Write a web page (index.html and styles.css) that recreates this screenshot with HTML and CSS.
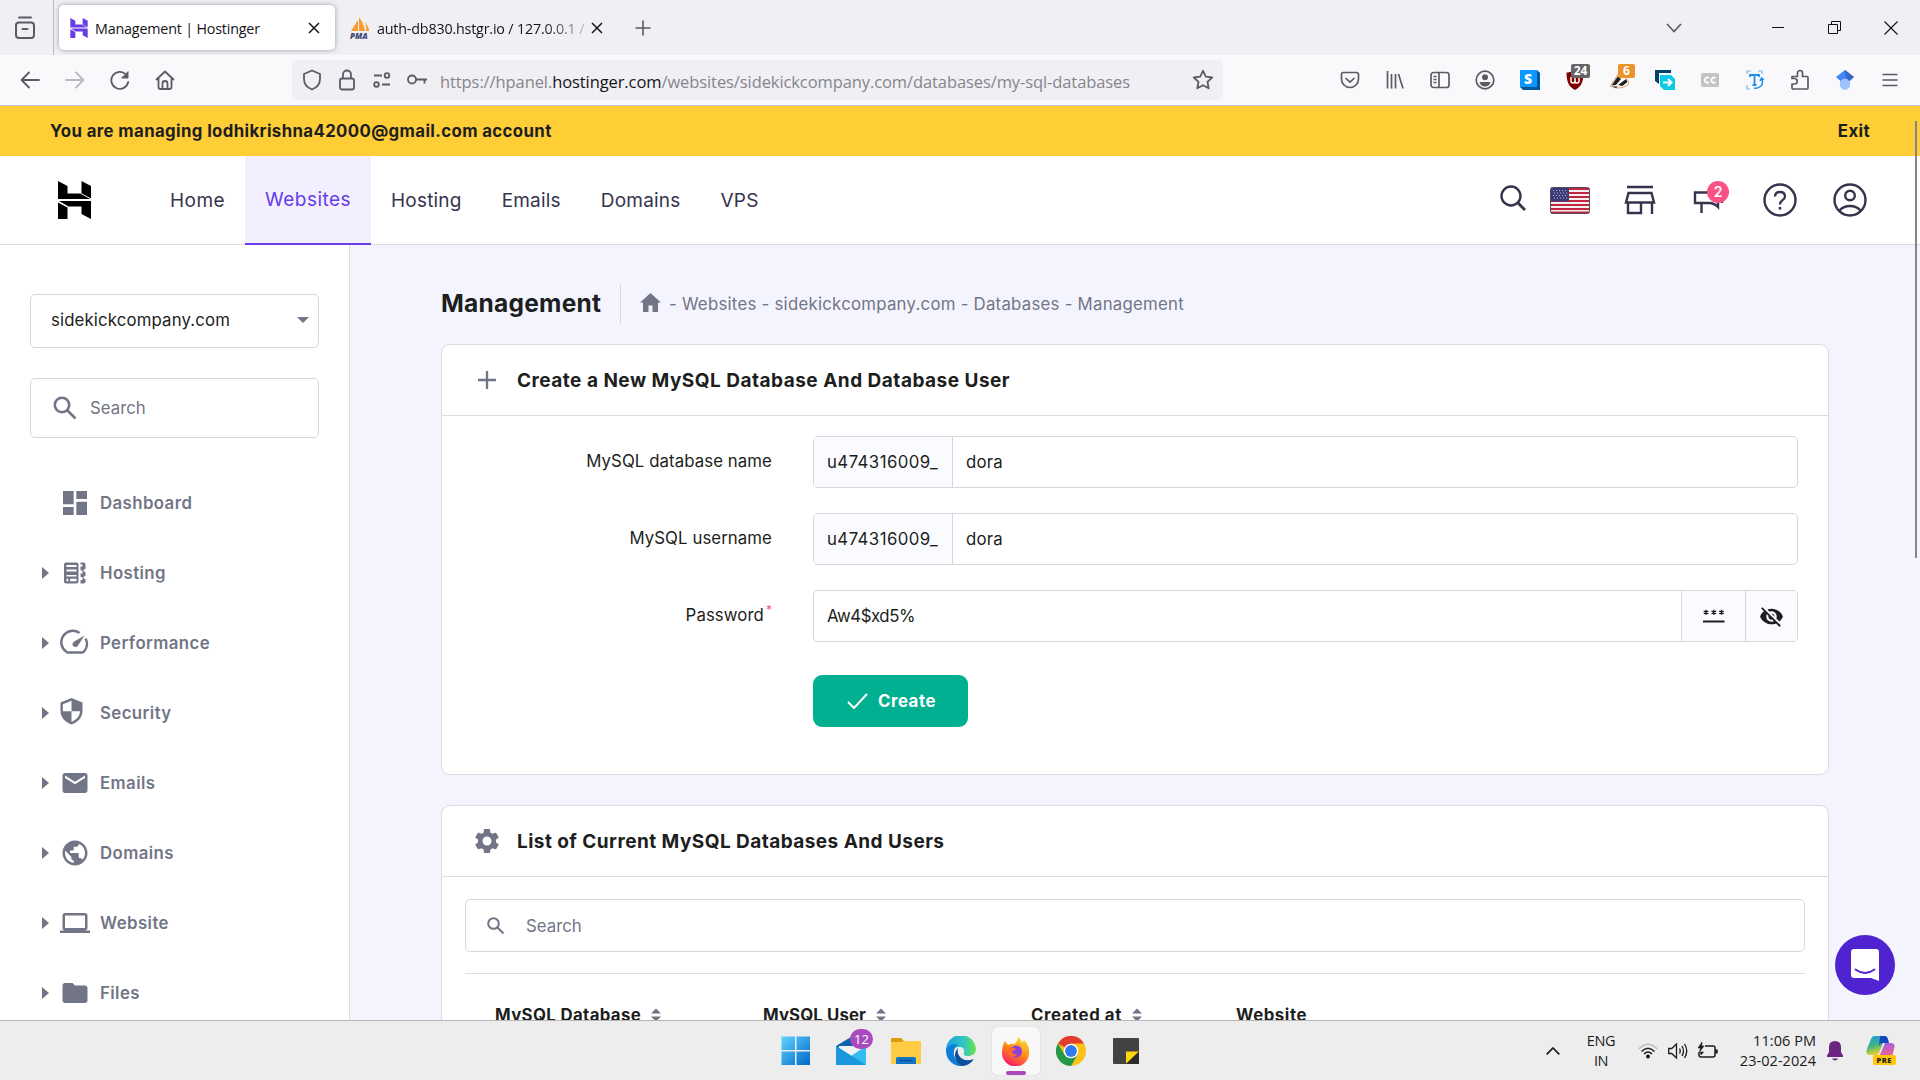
FILE: index.html
```html
<!DOCTYPE html>
<html lang="en">
<head>
<meta charset="utf-8">
<title>Management | Hostinger</title>
<link rel="stylesheet" href="styles.css">
</head>
<body>
<div class="screen">

<div class="tabs">
  <div class="firefox-view"><svg width="22" height="26" viewBox="0 0 22 26" fill="none" stroke="#5b5b66" stroke-width="2" stroke-linecap="round"><rect x="2" y="7.500" width="18" height="15.500" rx="3"/><path d="M5 2.500h12M8.500 14h5"/></svg></div>
  <div class="tab tab-active">
    <svg class="fav" width="18" height="20" viewBox="0 0 33 38" fill="#673de6"><use href="#hlogo"/></svg>
    <span class="tab-title">Management | Hostinger</span>
    <svg class="x" width="12" height="12" viewBox="0 0 12 12"><path d="M1 1l10 10M11 1L1 11"/></svg>
  </div>
  <div class="tab tab-idle">
    <svg class="fav" width="20" height="22" viewBox="0 0 20 22"><path d="M1 14L8 3v11zM9 14V0q5 7 6 14zM16 14q1-5-2-9 5 4 5 9z" fill="#f89c32"/><text x="0" y="22" class="pma">PMA</text></svg>
    <span class="tab-title tab-fade">auth-db830.hstgr.io / 127.0.0.1 /</span>
    <svg class="x" width="12" height="12" viewBox="0 0 12 12"><path d="M1 1l10 10M11 1L1 11"/></svg>
  </div>
  <svg class="new-tab" width="16" height="16" viewBox="0 0 16 16"><path d="M8 .5v15M.5 8h15" stroke="#5b5b66" stroke-width="1.600"/></svg>
  <div class="win">
    <svg width="16" height="10" viewBox="0 0 16 10" fill="none" stroke="#5b5b66" stroke-width="1.700"><path d="M1 1l7 7.500L15 1"/></svg>
    <svg class="w-min" width="12" height="12" viewBox="0 0 12 12"><path d="M0 5.500h12" stroke="#111"/></svg>
    <svg class="w-max" width="13" height="13" viewBox="0 0 13 13" fill="none" stroke="#111"><path d="M.5 3.500h9v9h-9zM3.500 3V.5h9v9H10"/></svg>
    <svg class="w-close" width="14" height="14" viewBox="0 0 14 14" stroke="#111" stroke-width="1.100"><path d="M.5.5l13 13M13.500.5l-13 13"/></svg>
  </div>
</div>

<div class="navbar">
  <div class="nav-btns">
    <svg viewBox="0 0 20 20"><path d="M19 10H2M9 2.500L1.500 10 9 17.500"/></svg>
    <svg class="dim" viewBox="0 0 20 20"><path d="M1 10h17M11 2.500l7.500 7.500-7.500 7.500"/></svg>
    <svg viewBox="0 0 20 20"><path d="M18.200 12A8.500 8.500 0 1 1 16 4.500"/><path d="M18 2v6h-6z" fill="#5b5b66" stroke-width="1"/></svg>
    <svg viewBox="0 0 20 20"><path d="M1.500 9.500L10 1.500l8.500 8M3.500 8v9q0 2 2 2h9q2 0 2-2V8M7.500 18.500v-5a2.500 2.500 0 0 1 5 0v5"/></svg>
  </div>
  <div class="urlbar">
    <svg width="20" height="22" viewBox="0 0 20 22"><path d="M10 1.500l8 3.500v5c0 5-3 8.500-8 10.500C5 18.500 2 15 2 10V5z"/></svg>
    <svg width="20" height="22" viewBox="0 0 20 22"><rect x="3" y="9.500" width="14" height="11" rx="2"/><path d="M6 9.500V5.500a4 4 0 0 1 8 0v4"/></svg>
    <svg width="20" height="22" viewBox="0 0 20 22"><path d="M2 6.500h8M10 15.500h8"/><circle cx="15" cy="6.500" r="2.300"/><circle cx="4.500" cy="15.500" r="2.300"/></svg>
    <svg width="22" height="22" viewBox="0 0 22 22"><circle cx="5" cy="10.500" r="4"/><path d="M9 10.500h11M17.500 10.500v4"/></svg>
    <span class="url">https://hpanel.<b>hostinger.com</b>/websites/sidekickcompany.com/databases/my-sql-databases</span>
    <svg class="star" width="22" height="22" viewBox="0 0 22 22"><path d="M11 1.800l2.800 5.900 6.400.8-4.700 4.400 1.200 6.400L11 16.200l-5.700 3.100 1.200-6.400L1.800 8.500l6.400-.8z"/></svg>
  </div>
  <div class="ext">
    <div><svg width="20" height="20" viewBox="0 0 20 20"><path d="M3.500 2.500h13q2 0 2 2V9a8.500 8.500 0 0 1-17 0V4.500q0-2 2-2zM5.500 8l4.500 4.200L14.500 8"/></svg></div>
    <div><svg width="18" height="20" viewBox="0 0 18 20"><path d="M1.500 1v17.500M5.500 4v14.500M9.500 4v14.500M12.500 4l4.500 14.500"/></svg></div>
    <div><svg width="20" height="20" viewBox="0 0 20 20"><rect x="1" y="2.500" width="18" height="15" rx="2.500"/><path d="M9 2.500v15M3.500 6.500h3M3.500 9.500h3M3.500 12.500h3"/></svg></div>
    <div><svg width="20" height="20" viewBox="0 0 20 20"><circle cx="10" cy="10" r="8.800"/><circle cx="10" cy="7.300" r="3" fill="#5b5b66" stroke="none"/><path d="M4.500 12h11c-1 3.500-3 4.500-5.500 4.500S5.500 15.500 4.500 12z" fill="#5b5b66" stroke="none"/></svg></div>
    <div><svg class="solid" width="20" height="20" viewBox="0 0 20 20"><path d="M0 0h17l3 3v17H3l-3-3z" fill="#01579b"/><path d="M0 0h17v17H0z" fill="#0a97ff"/><text x="4" y="14" class="g-s">S</text></svg></div>
    <div><svg class="solid" width="18" height="20" viewBox="0 0 18 20"><path d="M9 0q4 2.500 8.500 2.500C17.500 12 15 17 9 20 3 17 .5 12 .5 2.500 5 2.500 9 0 9 0z" fill="#800000"/><path d="M5 7v4q0 2 2 2t2-2V8v3q0 2 2 2t2-2V7" fill="none" stroke="#fff" stroke-width="1.500"/></svg><i class="bdg gray">24</i></div>
    <div><svg class="solid" width="22" height="20" viewBox="0 0 22 20"><path d="M1 16Q5 11 9 4l7 3q5 5 3 8-6 4-12 3z" fill="#fff" stroke="#e08a48" stroke-width=".8"/><path d="M2.500 15.500L9 6l3 3-5 6zM9 15l8-6 1.500 3-5 4zM3 16.500h6l-2 1.500z" fill="#222"/></svg><i class="bdg orange">6</i></div>
    <div><svg class="solid" width="20" height="20" viewBox="0 0 20 20"><path d="M0 0h16v3H4v11l-4-3z" fill="#04426b"/><path d="M5 5h11l4 4v11H9l-4-4z" fill="#0dcbe6"/><path d="M8 12.500h8M13 9l3.500 3.500L13 16" fill="none" stroke="#fff" stroke-width="2"/></svg></div>
    <div><svg class="solid" width="18" height="14" viewBox="0 0 18 14"><rect width="18" height="14" rx="2" fill="#c4c4c4"/><path d="M8 5a2.600 2.600 0 1 0 0 4.200M14.500 5a2.600 2.600 0 1 0 0 4.200" fill="none" stroke="#fff" stroke-width="1.800"/></svg></div>
    <div><svg class="blue" width="18" height="20" viewBox="0 0 18 20"><path d="M1 4V1h4M12 1h4v3M1 15v4h3" opacity=".6" stroke-width="1.200"/><path d="M4 7V5h9v2M8.500 5v10M6.500 15h4" stroke-width="1.800"/><path d="M15 8q3 5 0 8-3 3-7 2M14 11l1.500-3L18 10" stroke-width="1.500"/></svg></div>
    <div><svg width="20" height="22" viewBox="0 0 20 22"><path d="M3 20q-1 0-1-1v-4h2.500a2 2 0 0 0 0-5.500H2V7.500h5.500V4a2.500 2.500 0 0 1 5 0v3.500H17q1 0 1 1V19q0 1-1 1z" stroke-linejoin="round"/></svg></div>
    <div><svg class="solid" width="20" height="22" viewBox="0 0 20 22"><path d="M5 10h10v7q-1 3-5 4-4-1-5-4z" fill="#a0c3ff"/><path d="M10 1l9 7-4.500 4a5.500 5.500 0 0 0-9 0L1 8z" fill="#4285f4"/><path d="M10 1l9 7-4.500 4Q10 9 10 1z" fill="#356ac3"/></svg></div>
    <div><svg width="16" height="14" viewBox="0 0 16 14"><path d="M.5 1.500h15M.5 7h15M.5 12.500h15"/></svg></div>
  </div>
</div>

<div class="notice"><span>You are managing lodhikrishna42000@gmail.com account</span><span>Exit</span></div>

<header class="header">
  <svg class="logo" width="33" height="38" viewBox="0 0 33 38"><g id="hlogo"><path d="M0 0l9.500 5v7.500h12.800L32 18H0zM23.500 0L33 5v12.500l-9.500-5.200zM0 38V21.500l9.500 5V38zM33 38l-9.500-5v-7.500H10.500L1 20h32z"/></g></svg>
  <nav class="nav"><a>Home</a><a class="on">Websites</a><a>Hosting</a><a>Emails</a><a>Domains</a><a>VPS</a></nav>
  <div class="tools">
    <svg class="t-search" width="26" height="26" viewBox="0 0 26 26"><circle cx="11" cy="11" r="9.500"/><path d="M18 18l7 7" stroke-width="2.800"/></svg>
    <svg class="t-flag" width="40" height="27" viewBox="0 0 40 27"><rect width="40" height="27" rx="2" fill="#f4eff2"/><path d="M1 2h38M1 6h38M1 10h38M1 14h38M1 18h38M1 22h38M1 25.500h38" stroke="#c2263c" stroke-width="2"/><path d="M1 1h18v13.500H1z" fill="#3c3b78"/><path d="M3 3.500h15M4 6h14M3 8.500h15M4 11h14" stroke="#b8b8d0" stroke-width="1" stroke-dasharray="1 2"/><rect x=".5" y=".5" width="39" height="26" rx="2" fill="none" stroke="#514a63" stroke-width="1"/></svg>
    <svg class="t-shop" width="32" height="30" viewBox="0 0 32 30"><path d="M3 2h26M4.500 8h23l2.500 9.500H2zM4 18v10h13V18M28 18v11"/></svg>
    <div class="mega"><svg width="32" height="28" viewBox="0 0 32 28"><path d="M2 6.500h14q5 0 9-4.500v19q-4-4-9-4H2zM8.500 17v10M29 11v6"/></svg><i>2</i></div>
    <svg class="t-help" width="34" height="34" viewBox="0 0 34 34"><circle cx="17" cy="17" r="15.500"/><path d="M12 13.500Q12 9 17 9t5 4.500c0 3.500-5 3.500-5 8" stroke-width="2.300"/><path d="M17 24v2.600" stroke-width="2.600"/></svg>
    <svg class="t-user" width="34" height="34" viewBox="0 0 34 34"><circle cx="17" cy="17" r="15.500"/><circle cx="17" cy="12.500" r="4.800"/><path d="M6.500 27.500q4-4.500 10.500-4.500t10.500 4.500"/></svg>
  </div>
</header>

<div class="body">
  <aside class="side">
    <div class="select">sidekickcompany.com<svg width="12" height="6" viewBox="0 0 12 6"><path d="M0 0h12L6 6z" fill="#727586"/></svg></div>
    <div class="ssearch"><svg width="24" height="24" viewBox="0 0 24 24" fill="none" stroke="#727586" stroke-width="2.600"><circle cx="9" cy="9" r="7.200"/><path d="M14 14l8.500 8.500"/></svg>Search</div>
    <ul class="menu">
      <li><s></s><svg viewBox="3 3 18 18" class="m-dash"><path d="M3 13h8V3H3zm0 8h8v-6H3zm10 0h8V11h-8zm0-18v6h8V3z"/></svg>Dashboard</li>
      <li><s class="ar"></s><svg viewBox="0 0 30 30"><path fill-rule="evenodd" d="M6 4.500h10.500q2 0 2 2v17q0 2-2 2H6q-2 0-2-2v-17q0-2 2-2zM6.500 7v2h10V7zM6.500 11.500v2h10v-2zM6.500 17v1.500h10V17zM6.500 20.800v2.400h1.800v-2.400zm3.600 0v2.400h6.400v-2.400zM20.500 4.500h3q2 0 2 2V11q-2 0-2 1.500t2 1.500v4q-2 0-2 1.500t2 1.500v2.500q0 2-2 2h-3V22h2v-3h-2v-3.500h2v-3h-2V8.500h2v-2h-2z"/></svg>Hosting</li>
      <li><s class="ar"></s><svg viewBox="0 0 30 30"><path fill="none" stroke="#727586" stroke-width="2.500" d="M19.500 5A11.300 11.300 0 0 0 6 23.500q.5 1 2 1h14q1.500 0 2-1a11.300 11.300 0 0 0 1.500-13"/><path d="M24.500 7.500L18 17.500c-1 1.700-3.500 2-4.800.6s-.8-3.500 1-4.600z"/></svg>Performance</li>
      <li><s class="ar"></s><svg class="m-shield" viewBox="0 0 24 28"><path fill-rule="evenodd" d="M12 0l11.500 4.500v9c0 6-4.500 12-11.500 14C5 25.500.500 19.500.500 13.500v-9zM12 2.900L3 6.400v7.400h9zM12 13.800v11c5-1.800 8.500-6 9-11z"/></svg>Security</li>
      <li><s class="ar"></s><svg viewBox="0 0 24 24"><path d="M20 4H4c-1.100 0-2 .9-2 2v12c0 1.100.9 2 2 2h16c1.100 0 2-.9 2-2V6c0-1.100-.9-2-2-2zm0 4l-8 5-8-5V6l8 5 8-5z"/></svg>Emails</li>
      <li><s class="ar"></s><svg viewBox="0 0 24 24"><path d="M12 2C6.480 2 2 6.480 2 12s4.480 10 10 10 10-4.480 10-10S17.520 2 12 2zm-1 17.930c-3.950-.49-7-3.850-7-7.930 0-.62.08-1.210.21-1.790L9 15v1c0 1.100.9 2 2 2zm6.900-2.540c-.26-.81-1-1.390-1.900-1.390h-1v-3c0-.55-.45-1-1-1H8v-2h2c.55 0 1-.45 1-1V7h2c1.100 0 2-.9 2-2v-.41c2.930 1.190 5 4.060 5 7.410 0 2.080-.8 3.970-2.100 5.390z"/></svg>Domains</li>
      <li><s class="ar"></s><svg viewBox="0 0 24 24"><path d="M20 18c1.100 0 1.990-.9 1.990-2L22 6c0-1.100-.9-2-2-2H4c-1.100 0-2 .9-2 2v10c0 1.100.9 2 2 2H0v2h24v-2zM4 6h16v10H4z"/></svg>Website</li>
      <li><s class="ar"></s><svg viewBox="0 0 24 24"><path d="M10 4H4c-1.100 0-1.990.9-1.990 2L2 18c0 1.100.9 2 2 2h16c1.100 0 2-.9 2-2V8c0-1.100-.9-2-2-2h-8z"/></svg>Files</li>
    </ul>
  </aside>

  <main class="main">
    <div class="crumbs">
      <h1>Management</h1>
      <svg width="21" height="19" viewBox="0 0 21 19"><path d="M10.500 0L21 9.500h-3V19h-5.500v-6.500h-4V19H3V9.500H0z" fill="#727586"/></svg>
      <span class="path">- Websites - sidekickcompany.com - Databases - Management</span>
    </div>

    <section class="card card-form">
      <div class="card-head">
        <svg width="26" height="26" viewBox="0 0 26 26"><path d="M13 4v18M4 13h18" stroke="#727586" stroke-width="2.300"/></svg>
        <h2>Create a New MySQL Database And Database User</h2>
      </div>
      <div class="row"><label>MySQL database name</label><div class="input"><span class="prefix">u474316009_</span><span class="val">dora</span></div></div>
      <div class="row"><label>MySQL username</label><div class="input"><span class="prefix">u474316009_</span><span class="val">dora</span></div></div>
      <div class="row"><label>Password<sup>*</sup></label><div class="input"><span class="val pass">Aw4$xd5%</span>
        <span class="ib gen"><svg width="22" height="14" viewBox="0 0 22 14" stroke="#1d1e20" stroke-width="1.400"><path d="M0 12.500h21.500" stroke-width="2.200"/><path d="M3 .8v5M.7 2l4.600 2.700M5.300 2L.7 4.700M10.800.8v5M8.500 2l4.600 2.700M13.100 2L8.500 4.700M18.500.8v5M16.200 2l4.600 2.700M20.800 2l-4.600 2.700"/></svg></span>
        <span class="ib eye"><svg width="25" height="25" viewBox="0 0 24 24"><path fill="#1d1e20" d="M12 7c2.760 0 5 2.240 5 5 0 .65-.13 1.260-.36 1.830l2.920 2.920c1.510-1.260 2.700-2.890 3.430-4.750-1.730-4.390-6-7.500-11-7.500-1.400 0-2.740.25-3.980.7l2.160 2.160C10.740 7.130 11.350 7 12 7zM2 4.270l2.280 2.280.46.46C3.080 8.300 1.780 10.020 1 12c1.730 4.390 6 7.500 11 7.500 1.550 0 3.030-.3 4.380-.84l.42.42L19.730 22 21 20.730 3.270 3 2 4.270zM7.530 9.800l1.550 1.550c-.05.21-.08.43-.08.65 0 1.660 1.340 3 3 3 .22 0 .44-.03.65-.08l1.550 1.550c-.67.33-1.410.53-2.200.53-2.760 0-5-2.240-5-5 0-.79.2-1.530.53-2.200zm4.310-.78l3.150 3.150.02-.16c0-1.660-1.340-3-3-3l-.17.01z"/></svg></span></div></div>
      <button class="create"><svg width="21" height="16" viewBox="0 0 21 16" fill="none" stroke="#fff" stroke-width="2"><path d="M1 9l6 6L20 1"/></svg>Create</button>
    </section>

    <section class="card card-list">
      <div class="card-head">
        <svg class="gear" width="30" height="30" viewBox="0 0 24 24"><path fill="#727586" d="M19.140 12.940c.04-.3.060-.61.060-.94 0-.32-.02-.64-.07-.94l2.030-1.580c.18-.14.23-.41.12-.61l-1.920-3.320c-.12-.22-.37-.29-.59-.22l-2.390.96c-.5-.38-1.030-.7-1.620-.94l-.36-2.540c-.04-.24-.24-.41-.48-.41h-3.840c-.24 0-.43.17-.47.41l-.36 2.540c-.59.24-1.130.57-1.620.94l-2.390-.96c-.22-.08-.47 0-.59.22L2.740 8.870c-.12.21-.08.47.12.61l2.030 1.580c-.05.3-.09.63-.09.94s.02.64.07.94l-2.030 1.580c-.18.14-.23.41-.12.61l1.920 3.320c.12.22.37.29.59.22l2.390-.96c.5.38 1.030.7 1.620.94l.36 2.540c.05.24.24.41.48.41h3.840c.24 0 .44-.17.47-.41l.36-2.540c.59-.24 1.130-.56 1.620-.94l2.390.96c.22.08.47 0 .59-.22l1.920-3.320c.12-.22.07-.47-.12-.61zM12 15.600c-1.980 0-3.600-1.620-3.600-3.600s1.620-3.600 3.600-3.600 3.600 1.620 3.600 3.600-1.620 3.600-3.600 3.600z"/></svg>
        <h2>List of Current MySQL Databases And Users</h2>
      </div>
      <div class="lsearch"><svg width="18" height="18" viewBox="0 0 18 18" fill="none" stroke="#727586" stroke-width="2"><circle cx="6.500" cy="6.500" r="5.300"/><path d="M10.500 10.500l6 6"/></svg>Search</div>
      <div class="thead">
        <div>MySQL Database<svg width="10" height="14" viewBox="0 0 10 14"><path d="M0 5.500L5 .500l5 5zM0 8.500h10l-5 5z"/></svg></div>
        <div class="th-user">MySQL User<svg width="10" height="14" viewBox="0 0 10 14"><path d="M0 5.500L5 .500l5 5zM0 8.500h10l-5 5z"/></svg></div>
        <div class="th-wide">Created at<svg width="10" height="14" viewBox="0 0 10 14"><path d="M0 5.500L5 .500l5 5zM0 8.500h10l-5 5z"/></svg></div>
        <div class="th-wide">Website</div>
      </div>
    </section>
  </main>
</div>

<div class="scroll"></div>
<div class="chat"><svg width="28" height="32" viewBox="0 0 28 32"><path d="M3 0h22q3 0 3 3v29l-8-3H3q-3 0-3-3V3q0-3 3-3z" fill="#fff"/><path d="M4.500 20.500q9.500 7 19 0" fill="none" stroke="#4f23cf" stroke-width="1.800" stroke-linecap="round"/></svg></div>

<footer class="taskbar">
  <div class="apps">
    <div><svg width="30" height="30" viewBox="0 0 30 30"><defs><linearGradient id="w" x2="1" y2="1"><stop stop-color="#5fd4ff"/><stop offset="1" stop-color="#0067c8"/></linearGradient></defs><path d="M.5.5H14V14H.5zM15.500.5H29V14H15.500zM.5 15.500H14V29H.5zM15.500 15.500H29V29H15.500z" fill="url(#w)"/></svg></div>
    <div><svg width="30" height="30" viewBox="0 0 30 30"><path d="M0 10L15 1l15 9v5H0z" fill="#0f60ad"/><path d="M3 10h24v9H3z" fill="#f1f1f1"/><path d="M0 10l15 10 15-10v19H0z" fill="#35bdf1"/><path d="M0 10l30 19H0z" fill="#1a97df"/></svg><i>12</i></div>
    <div><svg width="30" height="30" viewBox="0 0 30 30"><path d="M0 3q0-1 1-1h9l3 3v6H0z" fill="#dc9b07"/><path d="M0 6h10l3-1h16q1 0 1 1v22H0z" fill="#ffcb45"/><path d="M5 28v-5q0-2 2-2h16q2 0 2 2v5z" fill="#0f74c5"/><path d="M9 24.500h12" stroke="#0a4c8c" stroke-width="1.300"/></svg></div>
    <div><svg width="30" height="30" viewBox="0 0 30 30"><defs><linearGradient id="e" x2="1"><stop stop-color="#1b9de2"/><stop offset=".6" stop-color="#31c7c1"/><stop offset="1" stop-color="#6be34c"/></linearGradient></defs><path d="M0 15A15 15 0 0 1 30 13c0 5-4 7-8 7-3 0-5-1-4-3 1-3-1-6-4-6C9 11 3 13 0 15z" fill="url(#e)"/><path d="M0 15c1-6 7-8 12-6q-5 3-4 10 2 8 9 11C8 31 0 24 0 15z" fill="#0f7fd6"/><path d="M12 12c-6 6-2 17 5 18q7-1 11-7-8 3-13-1c-3-3-4-6-3-10z" fill="#0c4f9c"/></svg></div>
    <div class="act"><svg width="30" height="30" viewBox="0 0 30 30"><defs><linearGradient id="f" x1=".8" x2=".3" y2="1"><stop stop-color="#ffe13a"/><stop offset=".5" stop-color="#ff8a16"/><stop offset="1" stop-color="#f5156c"/></linearGradient></defs><path d="M4 5l3 4q3-2 6-1 3-1 4-7 3 2 4 6l2-3q6 6 5 13a13.500 13.500 0 0 1-27 0Q1 10 4 5z" fill="url(#f)"/><circle cx="15" cy="15.500" r="6" fill="#8a3fe0"/><path d="M7 12q4-2 8 1-1 2-4 2 1 4 6 3-5 5-9 1-2-3-1-7z" fill="#ff6a2a"/></svg><u></u></div>
    <div><svg width="30" height="30" viewBox="0 0 30 30"><circle cx="15" cy="15" r="15" fill="#fbc116"/><path d="M15 15L2 7.500A15 15 0 0 1 28 7.500H15z" fill="#e33b2e"/><path d="M2 7.500A15 15 0 0 0 15 30l6.500-11.200H8.500z" fill="#229a4a"/><circle cx="15" cy="15" r="7.300" fill="#fff"/><circle cx="15" cy="15" r="5.900" fill="#3079ee"/></svg></div>
    <div><svg width="30" height="30" viewBox="0 0 30 30"><rect x="2" y="2" width="26" height="26" rx="1" fill="#424242"/><path d="M15 28V15.500h13z" fill="#ffd60a"/><path d="M15 28l13-12.500V27q0 1-1 1z" fill="#2b2b2b"/></svg></div>
  </div>
  <div class="tray">
    <svg class="up" width="14" height="8" viewBox="0 0 14 8" fill="none" stroke="#1b1b1b" stroke-width="1.700"><path d="M.7 7.300L7 1l6.300 6.300"/></svg>
    <div class="lang">ENG<br>IN</div>
    <svg class="wifi" width="20" height="16" viewBox="0 0 20 16" fill="none" stroke="#1b1b1b" stroke-width="1.400"><path d="M.7 6Q10-3.500 19.300 6" stroke="#bbb"/><path d="M3.500 8.500q6.500-6.500 13 0M6 11q4-4 8 0"/><circle cx="10" cy="13.500" r="1.300" fill="#1b1b1b"/></svg>
    <svg class="vol" width="20" height="18" viewBox="0 0 20 18" fill="none" stroke="#1b1b1b" stroke-width="1.300"><path d="M.7 6.500h3L8.500 2v14L3.700 11.500h-3zM11.500 6.500q1.500 2.500 0 5M14 4q3 5 0 10M16.500 2q4.500 7 0 14"/></svg>
    <svg class="bat" width="20" height="18" viewBox="0 0 20 18" fill="none" stroke="#1b1b1b" stroke-width="1.500"><path d="M7 4h8q2 0 2 2v7q0 2-2 2H3q-2 0-2-2V10"/><path d="M18.500 7.500v4" stroke-width="2.500"/><path d="M4 0L0 6h2.500L1.500 10 6 4H3.700zM2.500 10h3L3 13z" fill="#1b1b1b" stroke-width=".6"/></svg>
    <div class="clock">11:06 PM<br>23-02-2024</div>
    <svg class="bell" width="16" height="20" viewBox="0 0 16 20"><path d="M8 0q6 0 6 6v5l2 3.500V16H0v-1.500L2 11V6q0-6 6-6zM5 17.500h6Q10 19.500 8 19.500t-3-2z" fill="#6b2480"/></svg>
    <svg class="cop" width="30" height="29" viewBox="0 0 30 29"><defs><linearGradient id="c1" x2=".3" y2="1"><stop stop-color="#1b9bea"/><stop offset=".55" stop-color="#3fb487"/><stop offset="1" stop-color="#e5cf2b"/></linearGradient><linearGradient id="c2" x2=".2" y2="1"><stop stop-color="#9a5cf0"/><stop offset="1" stop-color="#f0628c"/></linearGradient></defs><path d="M8 0h12l-7 17q-1 2-3 2H4q-5 0-3-6L5 3q1-3 3-3z" fill="url(#c1)"/><path d="M14 0h5q2 0 3 3l1 4h-6q-3 0-4 3z" fill="#1546c0"/><path d="M19 7h6q5 0 3 6l-2 8H13z" fill="url(#c2)"/><rect x="7" y="19" width="23" height="10" rx="2" fill="#ffc60b"/><text x="10.500" y="27" class="pre">PRE</text></svg>
  </div>
</footer>
</div>
</body>
</html>
```
FILE: styles.css
```css
* { box-sizing: border-box; }
body { margin: 0; background: #f4f4ff; font-family: Inter, "DejaVu Sans", sans-serif; color: #1d1e20; }
svg { display: block; flex: none; }
.screen { position: relative; width: 1920px; height: 1080px; overflow: hidden; display: flex; flex-direction: column; }

/* browser chrome */
.tabs, .navbar, .taskbar { font-family: "Open Sans", "Noto Sans", sans-serif; }
.tabs { flex: none; height: 55px; background: #f0eff4; display: flex; align-items: center; }
.firefox-view { width: 54px; height: 55px; border-right: 1px solid #b9b9c0; display: flex; align-items: center; padding-left: 14px; }
.tab { height: 45px; display: flex; align-items: center; border-radius: 5px; }
.tab-active { width: 276px; margin-left: 5px; background: #fff; box-shadow: 0 0 5px rgba(0,0,0,.35); padding: 0 15px 0 11px; }
.tab-idle { width: 278px; padding: 0 10px 0 15px; }
.tab-title { margin-left: 7px; padding-top: 2px; font-size: 14.3px; letter-spacing: -.18px; white-space: nowrap; color: #15141a; }
.tab-fade { -webkit-mask-image: linear-gradient(90deg, #000 80%, rgba(0,0,0,.25)); mask-image: linear-gradient(90deg, #000 80%, rgba(0,0,0,.25)); }
.tab .x { margin-left: auto; stroke: #15141a; stroke-width: 1.5; }
.pma { font: italic 900 8px "Open Sans", sans-serif; fill: #454a78; }
.new-tab { margin-left: 22px; }
.win { margin-left: auto; margin-right: 22px; display: flex; align-items: center; }
.w-min { margin-left: 90px; }
.w-max { margin-left: 44px; }
.w-close { margin-left: 43px; }

.navbar { flex: none; height: 51px; background: #f9f9fb; border-bottom: 1px solid #c9c9cf; display: flex; align-items: center; }
.nav-btns { display: flex; gap: 25px; margin-left: 20px; width: 272px; }
.nav-btns svg { width: 20px; height: 20px; fill: none; stroke: #5b5b66; stroke-width: 1.8; stroke-linecap: round; stroke-linejoin: round; }
.nav-btns .dim { opacity: .4; }
.urlbar { width: 931px; height: 40px; background: #f0eff4; border-radius: 5px; display: flex; align-items: center; gap: 15px; padding: 0 9px 0 10px; }
.urlbar svg { fill: none; stroke: #5b5b66; stroke-width: 1.8; stroke-linejoin: round; }
.url { font-size: 16.5px; letter-spacing: -.093px; color: #86858d; white-space: nowrap; margin-left: -4px; padding-top: 3px; }
.url b { font-weight: 400; color: #15141a; }
.star { margin-left: auto; }
.ext { margin-left: auto; margin-right: 8px; display: flex; }
.ext div { position: relative; width: 45px; height: 50px; display: flex; align-items: center; justify-content: center; }
.ext svg { fill: none; stroke: #5b5b66; stroke-width: 1.7; }
.ext .solid { stroke: none; }
.ext .blue { stroke: #1e90e8; }
.g-s { font: 900 14px "Open Sans", sans-serif; fill: #fff; }
.bdg { position: absolute; top: 9px; height: 14px; font: 700 12px/14px "Open Sans", sans-serif; color: #fff; border-radius: 2px; text-align: center; }
.gray { left: 19px; width: 19px; background: #666; }
.orange { left: 21px; width: 17px; background: #ec9329; }

/* account banner and header */
.notice { flex: none; height: 50px; background: #ffcd35; display: flex; justify-content: space-between; align-items: center; padding: 0 50px; font-weight: 700; font-size: 16.8px; letter-spacing: .38px; }
.header { flex: none; height: 89px; background: #fff; border-bottom: 1px solid #dadce0; display: flex; align-items: center; }
.logo { margin-left: 58px; }
.nav { display: flex; margin-left: 59px; height: 89px; }
.nav a { display: flex; align-items: center; padding: 0 20px; font-size: 19px; letter-spacing: .2px; color: #36344d; }
.nav a:first-child { letter-spacing: .44px; }
.nav .on { background: #f2effe; color: #673de6; border-bottom: 2px solid #673de6; letter-spacing: .47px; }
.tools { margin-left: auto; margin-right: 53px; display: flex; align-items: center; }
.tools svg { fill: none; stroke: #36344d; stroke-width: 2.4; }
.tools .t-search { margin: 0 -1px 4px 0; }
.tools .t-flag { stroke: none; margin-left: 25px; }
.t-shop { margin-left: 34px; }
.mega { position: relative; width: 36px; margin-left: 37px; }
.mega i { position: absolute; left: 14px; top: -5px; width: 22px; height: 22px; border-radius: 50%; background: #fc5185; color: #fff; font: 600 14px/22px Inter, sans-serif; text-align: center; }
.t-help { margin-left: 34px; }
.t-user { margin-left: 36px; }

/* page body */
.body { flex: 1; min-height: 0; display: flex; }
.side { flex: none; width: 350px; background: #fff; border-right: 1px solid #dadce0; padding: 49px 30px 0; }
.select, .ssearch { border: 1px solid #d6d7dc; border-radius: 5px; display: flex; align-items: center; font-size: 16.8px; }
.select { height: 54px; padding: 0 9px 2px 20px; justify-content: space-between; letter-spacing: .135px; }
.ssearch { height: 60px; margin-top: 30px; padding-left: 22px; color: #727586; gap: 13px; }
.menu { list-style: none; margin: 30px 0 0; padding: 0; }
.menu li { height: 70px; display: flex; align-items: center; font-size: 16.8px; font-weight: 600; letter-spacing: .42px; color: #727586; }
.menu s { width: 7px; height: 12px; margin: 0 11px 0 12px; }
.menu .ar { background: #727586; clip-path: polygon(0 0, 100% 50%, 0 100%); }
.menu svg { width: 30px; height: 30px; fill: #727586; margin-right: 10px; }
.menu .m-dash { width: 24px; height: 24px; margin: 0 13px 0 3px; }
.menu .m-shield { width: 23px; height: 27px; margin: 0 17px 3px 0; }
.main { flex: 1; min-width: 0; padding: 34px 91px 0; }
.crumbs { height: 50px; display: flex; align-items: center; color: #727586; font-size: 16.8px; }
.crumbs h1 { margin: 0 20px 0 0; height: 40px; width: 180px; border-right: 1px solid #d6d7dc; font-size: 24.5px; line-height: 38px; font-weight: 700; letter-spacing: .25px; color: #1d1e20; }
.crumbs svg { margin: -3px 0 0 -1px; }
.path { margin-left: 8px; letter-spacing: .25px; }
.card { background: #fff; border: 1px solid #dadce0; border-radius: 9px; }
.card-form { height: 431px; margin-top: 15px; }
.card-list { height: 300px; margin-top: 30px; }
.card-head { height: 71px; border-bottom: 1px solid #dadce0; display: flex; align-items: center; }
.card-head svg { margin-left: 32px; }
.card-head .gear { margin-left: 30px; margin-right: -2px; }
.card-head h2 { margin: 0 0 0 17px; font-size: 19px; font-weight: 700; letter-spacing: .49px; }
.card-list h2 { letter-spacing: .45px; }
.row { display: flex; align-items: center; margin: 0 30px 25px 0; height: 52px; font-size: 16.8px; }
.card-head + .row { margin-top: 20px; }
.row label { width: 330px; margin-right: 41px; text-align: right; padding-bottom: 2px; letter-spacing: .08px; }
.row sup { color: #fc5185; font-size: 12px; line-height: 0; margin-left: 2px; vertical-align: 7px; }
.input { flex: 1; height: 52px; border: 1px solid #d6d7dc; border-radius: 5px; display: flex; align-items: stretch; overflow: hidden; }
.prefix, .val, .ib { display: flex; align-items: center; }
.prefix { width: 139px; padding-left: 13px; background: #fafbff; border-right: 1px solid #d6d7dc; letter-spacing: .436px; }
.val { flex: 1; padding-left: 13px; letter-spacing: .2px; }
.pass { letter-spacing: -.44px; }
.ib { background: #fafbff; border-left: 1px solid #d6d7dc; justify-content: center; }
.gen { width: 64px; }
.eye { width: 52px; }
.create { margin: 33px 0 0 371px; display: flex; align-items: center; width: 155px; height: 52px; padding: 0 0 0 34px; border: 0; border-radius: 9px; background: #00b090; color: #fff; font: 700 16.8px Inter, sans-serif; letter-spacing: .54px; gap: 10px; }
.lsearch { margin: 22px 23px 21px; height: 53px; border: 1px solid #d6d7dc; border-radius: 5px; display: flex; align-items: center; padding-left: 21px; gap: 21px; font-size: 16.8px; color: #727586; }
.thead { margin: 0 23px; border-top: 1px solid #dadce0; padding: 31px 0 0 30px; display: grid; grid-template-columns: 268px 268px 205px 1fr; font-size: 16.8px; font-weight: 700; letter-spacing: .35px; }
.thead div { display: flex; align-items: center; gap: 10px; }
.thead .th-user { letter-spacing: .1px; }
.thead .th-wide { letter-spacing: .57px; }
.thead svg { fill: #727586; }
.scroll { position: absolute; left: 1915px; top: 121px; width: 2px; height: 437px; background: #85858c; }
.chat { position: absolute; left: 1835px; top: 935px; width: 60px; height: 60px; border-radius: 50%; background: #4f23cf; display: flex; align-items: center; justify-content: center; }

/* taskbar */
.taskbar { position: relative; flex: none; height: 60px; background: #ededed; border-top: 1px solid #b8b8b8; display: flex; align-items: center; }
.apps { display: flex; gap: 7px; margin-left: 772px; }
.apps div { position: relative; width: 48px; height: 48px; border-radius: 5px; display: flex; align-items: center; justify-content: center; }
.apps i { position: absolute; left: 23px; top: 2px; min-width: 23px; height: 20px; border-radius: 10px; background: #a94bbf; color: #fff; font: 13px/20px "Open Sans", sans-serif; text-align: center; }
.apps .act { background: #f8f8f8; box-shadow: 0 0 1px #aaa; }
.apps u { position: absolute; left: 14px; bottom: 0; width: 20px; height: 4px; border-radius: 2px; background: #a94bbf; }
.tray { margin-left: auto; display: flex; align-items: center; font-size: 14.5px; line-height: 20px; color: #1b1b1b; }
.lang { width: 30px; margin-left: 26px; text-align: center; letter-spacing: -.4px; }
.wifi { margin-left: 22px; }
.vol, .bat { margin-left: 10px; }
.clock { width: 98px; text-align: right; letter-spacing: .05px; }
.bell { margin-left: 11px; }
.cop { margin: 0 24px 0 23px; }
.pre { font: 800 7.5px "Open Sans", sans-serif; letter-spacing: .5px; fill: #222; }
```
